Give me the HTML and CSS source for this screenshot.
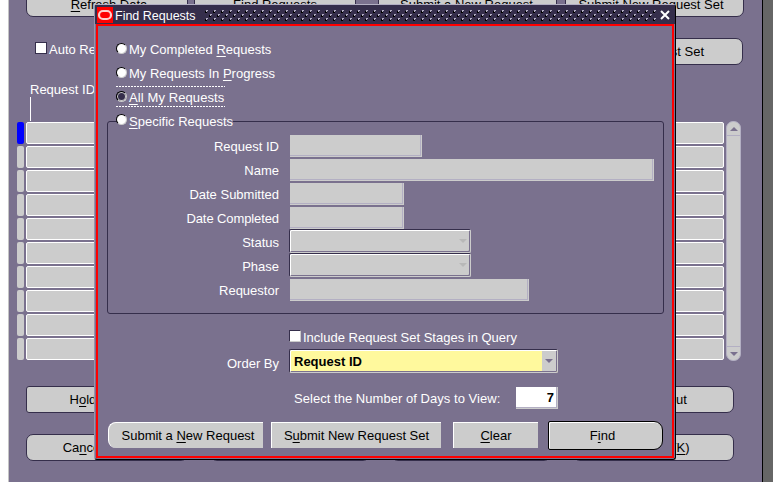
FILE: index.html
```html
<!DOCTYPE html>
<html lang="en">
<head>
<meta charset="utf-8">
<title>Find Requests</title>
<link rel="stylesheet" href="styles.css">
</head>
<body>
<main class="window">
  <div class="top-actions">
    <div class="btn w1"><u>R</u>efresh Data</div>
    <div class="btn w2">Find Requests</div>
    <div class="btn w3">Submit a New Request</div>
    <div class="btn w4">Submit New Request Set</div>
  </div>
  <div class="filter-row">
    <label class="auto"><span class="check"></span>Auto Refresh</label>
    <div class="btn copy">Copy Request Set</div>
  </div>
  <div class="column-head">Request ID</div>
  <div class="grid-area">
    <div class="rows">
      <div class="row current"><i></i><b></b></div>
      <div class="row"><i></i><b></b></div>
      <div class="row"><i></i><b></b></div>
      <div class="row"><i></i><b></b></div>
      <div class="row"><i></i><b></b></div>
      <div class="row"><i></i><b></b></div>
      <div class="row"><i></i><b></b></div>
      <div class="row"><i></i><b></b></div>
      <div class="row"><i></i><b></b></div>
      <div class="row"><i></i><b></b></div>
    </div>
    <div class="scrollbar">
      <div class="cap up"><svg width="8" height="4" viewBox="0 0 8 4"><path d="M0 4L4 0L8 4Z"/></svg></div>
      <div class="cap down"><svg width="8" height="4" viewBox="0 0 8 4"><path d="M0 0L4 4L8 0Z"/></svg></div>
    </div>
  </div>
  <div class="bottom-actions">
    <div class="btn first">H<u>o</u>ld Request</div>
    <div class="btn"></div>
    <div class="btn"></div>
    <div class="btn output">View Output</div>
    <div class="btn cancel">Ca<u>n</u>cel Request</div>
    <div class="btn"></div>
    <div class="btn"></div>
    <div class="btn log">View Log (<u>K</u>)</div>
  </div>
</main>

<section class="dialog">
  <header class="titlebar">
    <span class="logo"><svg width="16" height="16" viewBox="0 0 16 16"><rect x="2" y="4" width="12" height="8" rx="4"/></svg></span>
    <span class="title">Find Requests</span>
    <svg class="dots" width="451" height="11">
      <defs><pattern id="dot" width="8" height="8" patternUnits="userSpaceOnUse">
        <path class="dark" d="M0 1h1v1h1v1h-2zM4 5h1v1h1v1h-2z"/>
        <path class="light" d="M1 0h2v1h-2zM5 4h2v1h-2zM1 1h1v1h-1zM5 5h1v1h-1z"/>
      </pattern></defs>
      <rect width="451" height="11" fill="url(#dot)"/>
    </svg>
    <svg class="close" width="10" height="10" viewBox="0 0 10 10"><path d="M1 1L9 9M9 1L1 9"/></svg>
  </header>
  <div class="body">
    <div class="radio"><span class="knob"></span><span>My Completed <u>R</u>equests</span></div>
    <div class="radio"><span class="knob"></span><span>My Requests In <u>P</u>rogress</span></div>
    <div class="radio focus"><span class="knob on"></span><span><u>A</u>ll My Requests</span></div>
    <fieldset>
      <legend class="radio"><span class="knob"></span><span><u>S</u>pecific Requests</span></legend>
      <div class="fields">
        <label>Request ID</label><div class="field f-id"></div>
        <label>Name</label><div class="field f-name"></div>
        <label>Date Submitted</label><div class="field f-date"></div>
        <label class="tight">Date Completed</label><div class="field f-date"></div>
        <label>Status</label><div class="combo"><svg width="8" height="4" viewBox="0 0 8 4"><path d="M0 0L4 4L8 0Z"/></svg></div>
        <label>Phase</label><div class="combo"><svg width="8" height="4" viewBox="0 0 8 4"><path d="M0 0L4 4L8 0Z"/></svg></div>
        <label>Requestor</label><div class="field f-req"></div>
      </div>
    </fieldset>
    <div class="stages"><span class="check small"></span>Include Request Set Stages in Query</div>
    <div class="order">
      <label>Order By</label>
      <div class="combo yellow"><span>Request ID</span><em><svg width="8" height="4" viewBox="0 0 8 4"><path d="M0 0L4 4L8 0Z"/></svg></em></div>
    </div>
    <div class="days"><label>Select the Number of Days to View:</label><div class="num">7</div></div>
    <footer>
      <div class="act left">Submit a <u>N</u>ew Request</div>
      <div class="act mid">S<u>u</u>bmit New Request Set</div>
      <div class="act clear"><u>C</u>lear</div>
      <div class="act find">F<u>i</u>nd</div>
    </footer>
  </div>
</section>
</body>
</html>
```
FILE: styles.css
```css
* { box-sizing: border-box; }
body {
  margin: 0;
  width: 773px;
  height: 482px;
  overflow: hidden;
  position: relative;
  background: linear-gradient(90deg, #fff 8px, #c4c4c4 8px 9px, #666 9px);
  font: 13px/15px "Liberation Sans", Arial, sans-serif;
  color: #fff;
}
u { text-decoration: underline; text-underline-offset: 2px; text-decoration-thickness: 1px; text-decoration-skip-ink: none; }
svg { display: block; }
.window {
  margin-left: 9px;
  width: 754px;
  height: 482px;
  background: #7a718e;
  border-right: 1px solid #000;
  overflow: hidden;
}
.btn {
  height: 27px;
  background: #ccc;
  border: 1px solid #352e4b;
  border-radius: 7px;
  color: #000;
  text-align: center;
  line-height: 25px;
  white-space: nowrap;
}
.top-actions { display: flex; margin: -10px 0 0 17px; }
.top-actions .btn { line-height: 27px; }
.w1 { width: 162px; padding-left: 4px; }
.w2 { width: 162px; margin-left: 6px; }
.w3 { width: 179px; margin-left: 22px; padding-right: 2px; }
.w4 { width: 179px; margin-left: 8px; padding-right: 7px; }
.filter-row { display: flex; justify-content: space-between; margin: 21px 19px 0 26px; height: 27px; }
.auto { display: flex; padding-top: 4px; gap: 2px; line-height: 15px; }
.check { display: block; width: 12px; height: 12px; background: #fff; border: 1px solid #352e4b; }
.copy { width: 180px; text-align: right; padding-right: 38px; }
.column-head { margin: 17px 0 0 21px; height: 39px; }
.column-head::after { content: ""; display: block; width: 1px; height: 24px; background: #fff; }
.grid-area { display: flex; margin-left: 8px; height: 240px; gap: 2px; }
.rows { width: 707px; padding-top: 1px; }
.row { display: flex; gap: 2px; height: 22px; margin-bottom: 2px; }
.row i { width: 7px; background: #ccc; border-radius: 2px; }
.row b { flex: 1; background: #ccc; border: 1px solid #fff; border-radius: 2px; }
.row.current i { background: #00f; }
.scrollbar { display: flex; flex-direction: column; justify-content: space-between; width: 15px; height: 240px; background: #ccc; border: 1px solid #b3afc3; border-radius: 7px; overflow: hidden; }
.cap { height: 14px; display: grid; place-items: center; fill: #7a718e; }
.up { border-bottom: 1px solid #b3afc3; }
.down { border-top: 1px solid #b3afc3; }
.bottom-actions { display: grid; grid-template-columns: 162px 160px 160px 161px; justify-content: space-between; row-gap: 21px; margin: 25px 28px 0 17px; }
.first { border-radius: 3px 7px 7px 3px; padding-left: 4px; }
.cancel { padding-left: 4px; }
.output { padding-right: 4px; }
.log { padding-right: 2px; }
.dialog {
  position: absolute;
  left: 94px;
  top: 4px;
  width: 582px;
  height: 456px;
  background: #7a718e;
  border: 1px solid #000;
  border-top-color: #b3afc3;
  border-left-color: #9a94a9;
  border-radius: 3px;
}
.titlebar { display: flex; align-items: center; height: 19px; background: #352e4b; }
.logo { flex: none; width: 16px; height: 16px; margin: 1px 0 0 2px; background: #f00; }
.logo rect { fill: none; stroke: #ffcfcb; stroke-width: 2.2; }
.title { flex: none; width: 92px; padding-left: 2px; font-size: 12.5px; white-space: nowrap; margin-top: 4px; }
.dots { flex: none; margin-top: 2px; }
.dark { fill: #000; }
.light { fill: #b3afc3; }
.close { flex: none; margin: 1px 0 0 4px; stroke: #fff; stroke-width: 2; }
.body {
  margin: 0 1px 1px 1px;
  height: 434px;
  border: 2px solid #f00;
  padding-top: 12px;
}
.radio { display: flex; align-items: center; height: 24px; margin-left: 18px; line-height: 24px; white-space: nowrap; }
.knob { flex: none; width: 11px; height: 11px; margin: -3px 2px 0 0; border-radius: 50%; background: #fff; border: 1px solid; border-color: #000 #ccc #ccc #000; }
.knob.on { background: #352e4b; box-shadow: inset 0 0 0 1px #ccc; }
.focus {
  width: 109px;
  height: 21px;
  background: repeating-linear-gradient(90deg, #fff 0 2px, transparent 2px 3px) top / 100% 1px no-repeat, repeating-linear-gradient(90deg, #fff 0 2px, transparent 2px 3px) bottom / 100% 1px no-repeat;
  line-height: 25px;
}
.focus .knob { margin-top: -1px; }
.focus span + span { padding-top: 1px; letter-spacing: 0.1px; }
fieldset { position: relative; margin: 14px 8px 0 9px; padding: 0; height: 193px; border: 1px solid #352e4b; border-radius: 3px; min-width: 0; }
legend.radio { position: absolute; left: 8px; top: -13px; margin: 0; padding: 0; line-height: 26px; background: linear-gradient(#7a718e, #7a718e) 5px 0 no-repeat; }
legend.radio span + span { padding-top: 1px; }
.fields { display: grid; grid-template-columns: 171px 1fr; column-gap: 11px; grid-auto-rows: 24px; padding-top: 12px; }
.fields label { text-align: right; line-height: 26px; }
.fields .tight { letter-spacing: -0.1px; }
.field { height: 22px; margin-top: 1px; background: #ccc; border: solid #ccc; border-width: 0 1px 1px 0; box-shadow: inset -1px -1px #b3afc3; }
.f-id { width: 132px; }
.f-name { width: 364px; }
.f-date { width: 114px; }
.f-req { width: 239px; }
.combo { display: flex; align-items: center; justify-content: flex-end; width: 182px; height: 23px; margin-left: -1px; border: 1px solid #352e4b; border-right-color: #ccc; border-bottom-color: #ccc; border-radius: 2px; background: #ccc; box-shadow: inset 1px 1px #fff, inset -1px -1px #7a718e; padding-right: 3px; fill: #b8b8b8; }
.fields .combo { margin-top: -1px; height: 24px; }
.stages { display: flex; gap: 2px; margin: 16px 0 0 191px; height: 19px; }
.check.small { border-right-color: #ccc; border-bottom-color: #ccc; }
.order { display: flex; gap: 11px; height: 24px; }
.order label { width: 181px; text-align: right; line-height: 30px; }
.yellow { width: 269px; height: 24px; background: #fff99d; color: #000; font-weight: bold; justify-content: space-between; padding: 1px 1px 1px 4px; fill: #7a718e; }
.yellow em { width: 14px; height: 20px; background: #ccc; display: grid; place-items: center; }
.days { display: flex; margin: 14px 0 0 196px; height: 22px; }
.days label { width: 222px; line-height: 24px; letter-spacing: 0.04px; }
.num { width: 42px; height: 22px; background: #fff; color: #000; border: solid #ccc; border-width: 0 1px 1px 0; box-shadow: inset -1px -1px #b3afc3; text-align: right; padding-right: 3px; font-weight: bold; line-height: 21px; }
footer { display: flex; margin: 12px 0 0 10px; height: 29px; }
.act { height: 26px; margin-top: 1px; background: #ccc; border: solid #fff; border-width: 1px 0 0 1px; color: #000; text-align: center; line-height: 26px; }
.left { width: 155px; border-radius: 8px 0 0 8px; padding-left: 4px; }
.mid { width: 170px; margin-left: 8px; }
.clear { width: 85px; margin-left: 12px; }
.find { width: 115px; height: 29px; margin: 0 0 0 10px; border: 1px solid #000; border-radius: 2px 9px 9px 2px; box-shadow: inset 1px 1px #fff; padding-right: 6px; line-height: 28px; }
```
